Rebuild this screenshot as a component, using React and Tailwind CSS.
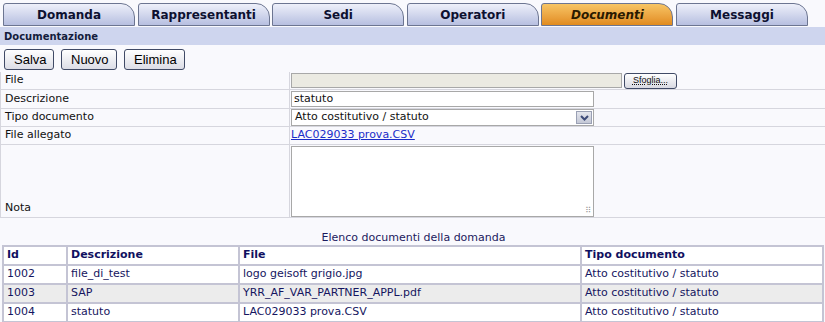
import { useState } from "react";

const tabs = ["Domanda", "Rappresentanti", "Sedi", "Operatori", "Documenti", "Messaggi"];

const docs = [
  { id: "1002", descr: "file_di_test", file: "logo geisoft grigio.jpg", tipo: "Atto costitutivo / statuto" },
  { id: "1003", descr: "SAP", file: "YRR_AF_VAR_PARTNER_APPL.pdf", tipo: "Atto costitutivo / statuto" },
  { id: "1004", descr: "statuto", file: "LAC029033 prova.CSV", tipo: "Atto costitutivo / statuto" },
];

const Tab = ({ label, active }) => (
  <div
    className={`w-[132px] h-[23px] flex items-center justify-center rounded-tl-[3px] rounded-tr-[14px] border border-[#6c7591] text-[12px] font-bold ${
      active
        ? "bg-gradient-to-b from-[#f7c564] to-[#e18b1c] italic text-[#2a1a00]"
        : "bg-gradient-to-b from-[#eef0fa] to-[#b7bfe0] text-[#0d1030]"
    }`}
  >
    {label}
  </div>
);

const Btn = ({ children, className = "" }) => (
  <button
    className={`h-[21px] px-[9px] rounded-[3px] border border-[#404a66] bg-gradient-to-b from-[#ffffff] to-[#dcdde6] text-[13px] text-black font-['Liberation_Sans',Arial,sans-serif] ${className}`}
  >
    {children}
  </button>
);

const Row = ({ label, children, className = "h-[18px]", labelClass = "items-center" }) => (
  <div className={`grid grid-cols-[289px_1fr] border-b border-[#d6d6de] ${className}`}>
    <div className={`flex border-r border-[#d6d6de] pl-[4px] ${labelClass}`}>{label}</div>
    <div className="flex items-center pl-[1px]">{children}</div>
  </div>
);

export default function App() {
  const [descr, setDescr] = useState("statuto");

  return (
    <div className="w-[825px] h-[322px] bg-[#f9f9fd] font-['DejaVu_Sans',Verdana,sans-serif] text-[11px] text-[#111] overflow-hidden">
      <div className="flex gap-[2.6px] pl-[3px] pt-[3px]">
        {tabs.map((t) => (
          <Tab key={t} label={t} active={t === "Documenti"} />
        ))}
      </div>

      <div className="mt-[1px] h-[18px] bg-[#ced5ee] flex items-center pl-[4px] font-bold text-[10px] text-[#141c3c]">
        Documentazione
      </div>

      <div className="flex gap-[7px] pl-[4px] pt-[4px] pb-[2px]">
        <Btn className="w-[50px]">Salva</Btn>
        <Btn className="w-[56px]">Nuovo</Btn>
        <Btn className="w-[61px]">Elimina</Btn>
      </div>

      <div className="border-l border-[#d6d6de]">
        <Row label="File">
          <div className="flex items-center gap-[2px]">
            <div className="w-[331px] h-[15px] bg-[#ebeae2] border border-[#a8a8a8]" />
            <button className="w-[53px] h-[16px] rounded-[3px] border border-[#404a66] bg-gradient-to-b from-white to-[#d8d9e2] text-[9px] leading-none font-['Liberation_Sans',Arial,sans-serif] underline decoration-dotted">
              Sfoglia...
            </button>
          </div>
        </Row>
        <Row label="Descrizione" className="h-[19px]">
          <input
            value={descr}
            onChange={(e) => setDescr(e.target.value)}
            className="w-[303px] h-[16px] bg-white border border-[#a8a8a8] px-[2px] text-[11px] outline-none"
          />
        </Row>
        <Row label="Tipo documento" className="h-[18px]">
          <div className="w-[303px] h-[17px] bg-white border border-[#a8a8a8] flex items-center justify-between pl-[3px] pr-[1px]">
            <span>Atto costitutivo / statuto</span>
            <div className="w-[16px] h-[13px] bg-gradient-to-b from-[#e4e6ee] to-[#c4c8d6] border border-[#9aa0b4] flex items-center justify-center">
              <svg width="9" height="6" viewBox="0 0 9 6">
                <path d="M1 1 L4.5 4.5 L8 1" stroke="#3c4a78" strokeWidth="2" fill="none" />
              </svg>
            </div>
          </div>
        </Row>
        <Row label="File allegato" className="h-[18px]">
          <a href="#" className="text-[#1a2cc8] underline">
            LAC029033 prova.CSV
          </a>
        </Row>
        <Row label="Nota" className="h-[73px]" labelClass="items-end pb-[1px]">
          <div className="relative w-[303px] h-[71px] bg-white border border-[#a8a8a8]">
            <span className="absolute right-[2px] bottom-[1px] text-[8px] leading-none text-[#9a9a9a]">⠿</span>
          </div>
        </Row>
      </div>

      <div className="text-center text-[#1c1a5e] pl-[2px] pt-[13px] pb-0 leading-[14px]">
        Elenco documenti della domanda
      </div>

      <table className="ml-[2px] w-[822px] border-collapse border-2 border-[#c4c4d4] bg-white text-[11px]">
        <thead>
          <tr className="h-[17px] text-left text-[#101060] font-bold">
            <th className="border-2 border-[#c4c4d4] pl-[3px] w-[64px]">Id</th>
            <th className="border-2 border-[#c4c4d4] pl-[3px] w-[172px]">Descrizione</th>
            <th className="border-2 border-[#c4c4d4] pl-[3px] w-[342px]">File</th>
            <th className="border-2 border-[#c4c4d4] pl-[3px]">Tipo documento</th>
          </tr>
        </thead>
        <tbody className="text-[#151560]">
          {docs.map((d, i) => (
            <tr key={d.id} className={`h-[19px] ${i % 2 === 1 ? "bg-[#ececec]" : "bg-white"}`}>
              <td className="border-2 border-[#c4c4d4] pl-[3px]">{d.id}</td>
              <td className="border-2 border-[#c4c4d4] pl-[3px]">{d.descr}</td>
              <td className="border-2 border-[#c4c4d4] pl-[3px]">{d.file}</td>
              <td className="border-2 border-[#c4c4d4] pl-[3px]">{d.tipo}</td>
            </tr>
          ))}
        </tbody>
      </table>
    </div>
  );
}
